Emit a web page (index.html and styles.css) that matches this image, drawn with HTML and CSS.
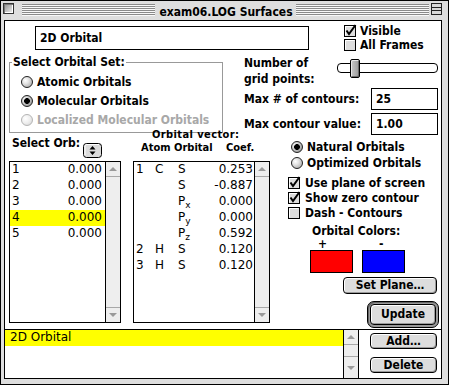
FILE: index.html
```html
<!DOCTYPE html>
<html>
<head>
<meta charset="utf-8">
<title>exam06.LOG Surfaces</title>
<link rel="stylesheet" href="styles.css">
</head>
<body>
<div class="window">
  <div class="titlebar">
    <span class="closebox"></span>
    <span class="stripes stripes-left"></span>
    <span class="title">exam06.LOG Surfaces</span>
    <span class="stripes"></span>
    <svg class="collapsebox" width="11" height="12" viewBox="0 0 11 12">
      <rect x="0.5" y="0.5" width="10" height="11" fill="#d8d8d8" stroke="#222"/>
      <line x1="1" y1="4.5" x2="10" y2="4.5" stroke="#222"/>
      <line x1="1" y1="7.5" x2="10" y2="7.5" stroke="#222"/>
    </svg>
  </div>
  <div class="frame">
    <div class="content">
      <div class="row-a">
        <div class="textfield name-field">2D Orbital</div>
        <div class="checks-top">
          <div class="check-row">
            <svg class="cb" width="12" height="12" viewBox="0 0 12 12"><rect x="0.5" y="0.5" width="11" height="11" fill="#ddd" stroke="#000"/><path d="M1.5 1.5 H10.5 M1.5 1.5 V10.5" stroke="#fff"/><path d="M2.5 5.5 L5 9 L11.5 0" stroke="#000" stroke-width="2" fill="none"/></svg>
            <span>Visible</span>
          </div>
          <div class="check-row">
            <svg class="cb" width="12" height="12" viewBox="0 0 12 12"><rect x="0.5" y="0.5" width="11" height="11" fill="#ddd" stroke="#000"/><path d="M1.5 1.5 H10.5 M1.5 1.5 V10.5" stroke="#fff"/></svg>
            <span>All Frames</span>
          </div>
        </div>
      </div>

      <div class="row-b">
        <div class="group">
          <div class="legend">Select Orbital Set:</div>
          <div class="radio-list">
            <div class="radio-row"><span class="rb"></span><span>Atomic Orbitals</span></div>
            <div class="radio-row"><span class="rb on"></span><span>Molecular Orbitals</span></div>
            <div class="radio-row disabled"><span class="rb"></span><span>Localized Molecular Orbitals</span></div>
          </div>
        </div>
        <div class="settings">
          <div class="grid-row">
            <div class="grid-label">Number of<br>grid points:</div>
            <div class="slider"><span class="thumb"></span></div>
          </div>
          <div class="field-row first">
            <span class="field-label">Max # of contours:</span>
            <div class="textfield small-field">25</div>
          </div>
          <div class="field-row">
            <span class="field-label">Max contour value:</span>
            <div class="textfield small-field">1.00</div>
          </div>
        </div>
      </div>

      <div class="row-c">
        <div class="col-orb">
          <div class="orb-head">
            <span>Select Orb:</span>
            <svg class="popup" width="19" height="15" viewBox="0 0 19 15"><rect x="0.5" y="0.5" width="18" height="14" rx="3" fill="#dcdcdc" stroke="#000"/><path d="M2 12.5 V3 Q2 1.5 3.5 1.5 H16" stroke="#fff" fill="none"/><path d="M9.5 3 L12.5 6.5 H6.5 Z M9.5 12 L12.5 8.5 H6.5 Z" fill="#000"/></svg>
          </div>
          <div class="list orb-list">
            <div class="rows">
              <div class="orb-row"><span>1</span><span>0.000</span></div>
              <div class="orb-row"><span>2</span><span>0.000</span></div>
              <div class="orb-row"><span>3</span><span>0.000</span></div>
              <div class="orb-row sel"><span>4</span><span>0.000</span></div>
              <div class="orb-row"><span>5</span><span>0.000</span></div>
            </div>
            <div class="vscroll">
              <div class="sb-up"><span class="tri-up"></span></div>
              <div class="sb-track"></div>
              <div class="sb-down"><span class="tri-down"></span></div>
            </div>
          </div>
        </div>

        <div class="col-vec">
          <div class="vec-title">Orbital vector:</div>
          <div class="vec-head"><span>Atom</span><span>Orbital</span><span>Coef.</span></div>
          <div class="list vec-list">
            <div class="rows">
              <div class="vec-row"><span>1</span><span>C</span><span>S</span><span class="coef">0.253</span></div>
              <div class="vec-row"><span></span><span></span><span>S</span><span class="coef">-0.887</span></div>
              <div class="vec-row"><span></span><span></span><span>P<span class="sub">x</span></span><span class="coef">0.000</span></div>
              <div class="vec-row"><span></span><span></span><span>P<span class="sub">y</span></span><span class="coef">0.000</span></div>
              <div class="vec-row"><span></span><span></span><span>P<span class="sub">z</span></span><span class="coef">0.592</span></div>
              <div class="vec-row"><span>2</span><span>H</span><span>S</span><span class="coef">0.120</span></div>
              <div class="vec-row"><span>3</span><span>H</span><span>S</span><span class="coef">0.120</span></div>
            </div>
            <div class="vscroll">
              <div class="sb-up"><span class="tri-up"></span></div>
              <div class="sb-track"></div>
              <div class="sb-down"><span class="tri-down"></span></div>
            </div>
          </div>
        </div>

        <div class="col-opts">
          <div class="opt-radio"><span class="rb on"></span><span>Natural Orbitals</span></div>
          <div class="opt-radio"><span class="rb"></span><span>Optimized Orbitals</span></div>
          <div class="opt-checks">
            <div class="opt-check">
              <svg class="cb" width="12" height="12" viewBox="0 0 12 12"><rect x="0.5" y="0.5" width="11" height="11" fill="#ddd" stroke="#000"/><path d="M1.5 1.5 H10.5 M1.5 1.5 V10.5" stroke="#fff"/><path d="M2.5 5.5 L5 9 L11.5 0" stroke="#000" stroke-width="2" fill="none"/></svg>
              <span>Use plane of screen</span>
            </div>
            <div class="opt-check">
              <svg class="cb" width="12" height="12" viewBox="0 0 12 12"><rect x="0.5" y="0.5" width="11" height="11" fill="#ddd" stroke="#000"/><path d="M1.5 1.5 H10.5 M1.5 1.5 V10.5" stroke="#fff"/><path d="M2.5 5.5 L5 9 L11.5 0" stroke="#000" stroke-width="2" fill="none"/></svg>
              <span>Show zero contour</span>
            </div>
            <div class="opt-check">
              <svg class="cb" width="12" height="12" viewBox="0 0 12 12"><rect x="0.5" y="0.5" width="11" height="11" fill="#ddd" stroke="#000"/><path d="M1.5 1.5 H10.5 M1.5 1.5 V10.5" stroke="#fff"/></svg>
              <span>Dash - Contours</span>
            </div>
          </div>
          <div class="colors-title">Orbital Colors:</div>
          <div class="signs"><span class="plus">+</span><span class="minus">-</span></div>
          <div class="swatches"><span class="swatch red"></span><span class="swatch blue"></span></div>
          <div class="btn setplane">Set Plane…</div>
          <div class="default-ring"><div class="btn update">Update</div></div>
        </div>
      </div>

      <div class="row-d">
        <div class="list surf-list">
          <div class="rows">
            <div class="surf-row sel">2D Orbital</div>
          </div>
          <div class="vscroll wide">
            <div class="sb-up"><span class="tri-up"></span></div>
            <div class="sb-track"></div>
            <div class="sb-down tall"><span class="tri-down"></span></div>
          </div>
        </div>
        <div class="surf-buttons">
          <div class="btn add">Add…</div>
          <div class="btn delete">Delete</div>
        </div>
      </div>
    </div>
  </div>
</div>
</body>
</html>
```

FILE: styles.css
```css
* { box-sizing: border-box; margin: 0; padding: 0; }
html, body { width: 449px; height: 385px; overflow: hidden; background: #fff; }
body {
  font-family: "DejaVu Sans Condensed", "DejaVu Sans", sans-serif;
  font-stretch: condensed;
  font-weight: bold;
  font-size: 12px;
  line-height: 14px;
  color: #000;
}

/* window chrome */
.window {
  width: 449px; height: 385px;
  border: 1px solid #000;
  background: #dedede;
  display: flex; flex-direction: column;
}
.titlebar {
  height: 19px; flex: none;
  display: flex; align-items: flex-start;
  padding: 0 6px 0 2px;
}
.closebox {
  width: 11px; height: 11px; margin-top: 2px;
  border: 1px solid #333;
  background: linear-gradient(135deg, #8c8c8c, #f4f4f4);
  box-shadow: inset 1px 1px 0 #777, inset -1px -1px 0 #fff;
}
.stripes {
  flex: 1; height: 12px; margin-top: 3px;
  background: repeating-linear-gradient(to bottom, #8a8a8a 0 1px, #f8f8f8 1px 2px);
}
.stripes-left { margin-left: 8px; }
.title { padding: 0 3px 0 4px; margin-top: 4px; white-space: nowrap; }
.collapsebox { display: block; margin-left: 2px; margin-top: 2px; }

.frame { flex: 1; display: flex; padding: 0 6px 5px 3px; }
.content {
  flex: 1; display: flex; flex-direction: column;
  border: 1px solid #000; background: #fff;
}

/* common */
.textfield { border: 1px solid #000; background: #fff; padding-left: 4px; white-space: nowrap; }
.cb { display: block; flex: none; overflow: visible; }
.rb {
  display: block; flex: none;
  width: 12px; height: 12px; border-radius: 50%;
  border: 1px solid #222;
  background: radial-gradient(circle at 35% 35%, #fff 0, #e4e4e4 35%, #9a9a9a 100%);
}
.rb.on {
  background:
    radial-gradient(circle at 50% 50%, #000 0, #000 2.6px, transparent 3.2px),
    radial-gradient(circle at 35% 35%, #fff 0, #cfcfcf 40%, #7a7a7a 100%);
}
.disabled { color: #a8a8a8; }
.disabled .rb { border-color: #b4b4b4; background: radial-gradient(circle at 35% 35%, #fff 0, #eee 50%, #d0d0d0 100%); }

/* row A */
.row-a { display: flex; height: 34px; padding-top: 3px; flex: none; }
.name-field { margin-top: 2px; margin-left: 30px; width: 274px; height: 24px; line-height: 22px; }
.checks-top { margin-left: 35px; }
.check-row { display: flex; align-items: center; height: 14px; gap: 4px; }

/* row B */
.row-b { display: flex; height: 79px; flex: none; }
.group {
  margin-left: 4px; margin-top: 7px;
  width: 214px; height: 71px;
  border: 1px solid #999;
}
.legend {
  width: fit-content; margin: -8px 0 0 2px; padding: 0 1px;
  background: #fff; line-height: 14px;
}
.radio-list { margin-top: 3px; }
.radio-row { display: flex; align-items: center; height: 19px; padding-left: 11px; gap: 4px; white-space: nowrap; }

.settings { margin-left: 21px; width: 194px; }
.grid-row { display: flex; height: 32px; }
.grid-label { width: 93px; line-height: 16px; white-space: nowrap; }
.slider {
  position: relative;
  width: 101px; height: 10px; margin-top: 8px;
  border: 1px solid #000; border-radius: 4px; background: #fff;
}
.thumb {
  position: absolute; left: 12px; top: -5px;
  width: 10px; height: 19px;
  border: 1px solid #000; border-radius: 2px;
  background: linear-gradient(to right, #c8c8c8, #9a9a9a);
  box-shadow: inset 1px 1px 0 #e8e8e8, inset -1px -1px 0 #6a6a6a;
}
.field-row { display: flex; align-items: center; height: 22px; margin-top: 3px; }
.field-row.first { margin-top: 1px; }
.field-label { width: 127px; white-space: nowrap; }
.small-field { width: 67px; height: 22px; line-height: 20px; }

/* row C */
.row-c { display: flex; align-items: flex-start; height: 195px; flex: none; }
.list { border: 1px solid #000; display: flex; background: #fff; }
.rows { flex: 1; font-family: "DejaVu Sans", sans-serif; font-weight: normal; font-stretch: normal; }
.vscroll { width: 15px; border-left: 1px solid #000; background: #eee; display: flex; flex-direction: column; }
.vscroll.wide { width: 16px; border-right: 1px solid #000; }
.sb-up { height: 15px; border-bottom: 1px solid #a8a8a8; display: flex; align-items: center; justify-content: center; }
.sb-track { flex: 1; }
.sb-down { height: 15px; border-top: 1px solid #a8a8a8; display: flex; align-items: center; justify-content: center; }
.sb-down.tall { height: 22px; }
.tri-up { width: 0; height: 0; border-left: 4px solid transparent; border-right: 4px solid transparent; border-bottom: 4px solid #9a9a9a; }
.tri-down { width: 0; height: 0; border-left: 4px solid transparent; border-right: 4px solid transparent; border-top: 4px solid #9a9a9a; }
.sel { background: #ffff00; }

.col-orb { margin-left: 4px; width: 112px; margin-top: 2px; }
.orb-head { display: grid; grid-template-columns: 71px 19px; padding-left: 3px; height: 25px; white-space: nowrap; }
.popup { display: block; margin-top: 7px; }
.orb-list { height: 162px; }
.orb-row { display: flex; justify-content: space-between; height: 16px; padding: 0 3px 0 2px; }

.col-vec { margin-left: 12px; width: 137px; margin-top: -6px; }
.vec-title { font-size: 11px; line-height: 13px; letter-spacing: 0.4px; padding-left: 19px; white-space: nowrap; }
.vec-head { display: grid; grid-template-columns: 33px 52px auto; font-size: 11px; line-height: 13px; padding-left: 8px; white-space: nowrap; }
.vec-list { height: 162px; margin-top: 7px; }
.vec-row { display: grid; grid-template-columns: 19px 23px 35px 1fr; height: 16px; padding: 0 1px 0 2px; }
.coef { text-align: right; }
.sub { font-size: 9px; vertical-align: -3px; line-height: 0; }

.col-opts { margin-left: 17px; width: 154px; margin-top: 5px; }
.opt-radio { display: flex; align-items: center; height: 16px; padding-left: 4px; gap: 4px; white-space: nowrap; }
.opt-checks { margin-top: 4px; }
.opt-check { display: flex; align-items: center; height: 15px; padding-left: 1px; gap: 5px; white-space: nowrap; }
.colors-title { margin-top: 4px; padding-left: 25px; }
.signs { display: flex; height: 12px; line-height: 12px; }
.plus { margin-left: 31px; width: 61px; }
.swatches { display: flex; gap: 9px; margin-left: 23px; }
.swatch { display: block; width: 43px; height: 23px; border: 1px solid #000; }
.red { background: #ff0000; }
.blue { background: #0000ff; }

.btn {
  border: 1px solid #000; border-radius: 4px;
  background: #dddddd;
  box-shadow: inset 1px 1px 0 #fff, inset -1px -1px 0 #9a9a9a;
  text-align: center; white-space: nowrap;
}
.setplane { margin-top: 4px; margin-left: 56px; width: 94px; height: 17px; line-height: 15px; }
.default-ring {
  margin-top: 7px; margin-left: 80px; width: 72px; height: 27px;
  border: 1px solid #000; border-radius: 7px;
  background: #9a9a9a; padding: 2px;
  box-shadow: inset 1px 1px 0 #666;
}
.update { height: 21px; line-height: 19px; }

/* row D */
.row-d { flex: 1; display: flex; border-top: 1px solid #000; }
.surf-list { width: 354px; border: none; }
.surf-row { height: 16px; padding-left: 5px; }
.surf-buttons { margin-left: 11px; margin-top: 3px; width: 67px; }
.add, .delete { height: 16px; line-height: 14px; }
.delete { margin-top: 8px; }
```
